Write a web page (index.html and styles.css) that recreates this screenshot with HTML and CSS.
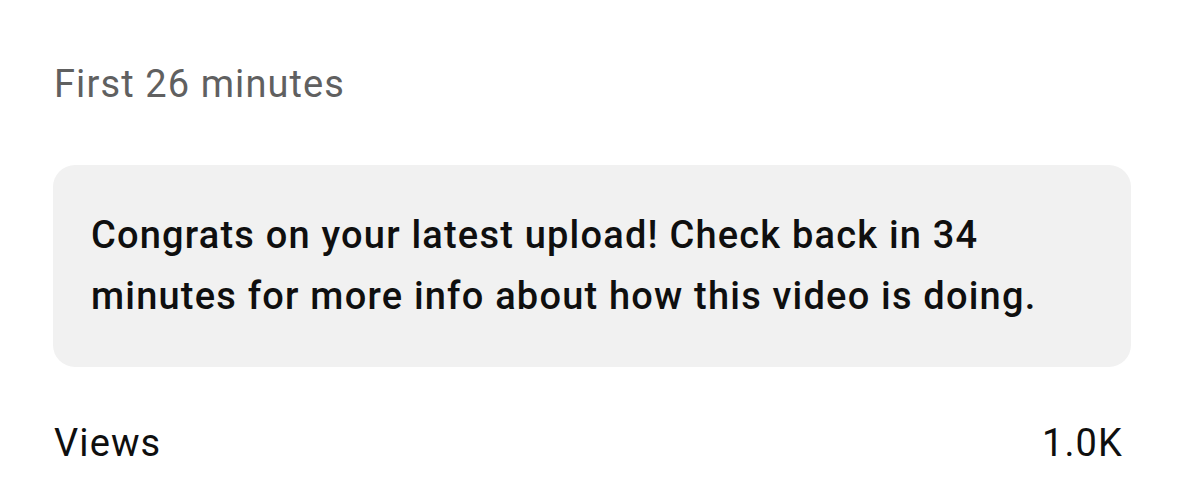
FILE: index.html
```html
<!DOCTYPE html>
<html lang="en">
<head>
  <meta charset="UTF-8">
  <meta name="viewport" content="width=device-width, initial-scale=1.0">
  <title>Realtime</title>
  <link rel="stylesheet" href="styles.css">
</head>
<body>
<div class="panel">
  <div class="period">First 26 minutes</div>

  <div class="notice">
    Congrats on your latest upload! Check back in 34
    minutes for more info about how this video is doing.
  </div>

  <div class="stat-row">
    <span class="stat-label">Views</span>
    <span class="stat-value">1.0K</span>
  </div>
</div>
</body>
</html>
```

FILE: styles.css
```css
body {
    font-family: Roboto, "Liberation Sans", Arial, sans-serif;
    background-color: #ffffff;
    margin: 0;
}
.panel {
    padding: 57px 68px 0 53px;
}
.period {
    font-size: 38px;
    line-height: 54px;
    letter-spacing: 1.1px;
    color: #606060;
    padding-left: 1px;
}
.notice {
    margin-top: 54px;
    background-color: #f1f1f1;
    border-radius: 22px;
    padding: 40px 70px 40px 38px;
    font-size: 38px;
    font-weight: 500;
    letter-spacing: 1.2px;
    line-height: 61px;
    color: #0f0f0f;
}
.stat-row {
    display: flex;
    justify-content: space-between;
    align-items: center;
    margin-top: 49px;
    padding: 0 8px 0 1px;
    font-size: 38px;
    line-height: 54px;
    letter-spacing: 1.1px;
    color: #0f0f0f;
}
```
